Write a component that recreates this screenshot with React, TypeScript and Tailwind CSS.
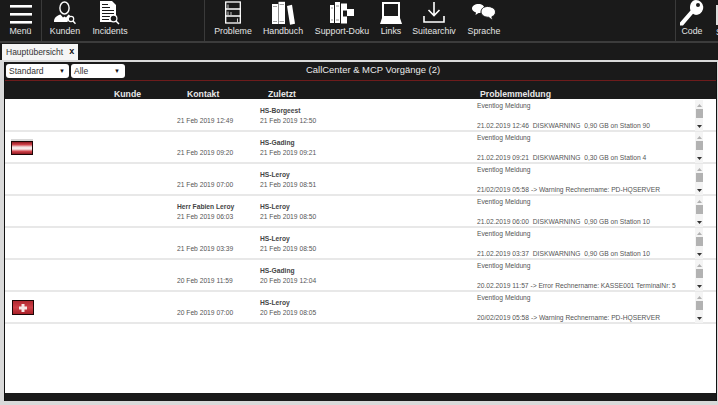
import { ReactNode } from 'react';

type NavItem = { label: string; width: string; icon: ReactNode };

const MenuIcon = () => (
  <svg width="22" height="19" viewBox="0 0 22 19" fill="#fff">
    <rect x="0" y="0" width="22" height="2.600" />
    <rect x="0" y="8" width="22" height="2.600" />
    <rect x="0" y="16" width="22" height="2.600" />
  </svg>
);

const KundenIcon = () => (
  <svg width="22" height="24" viewBox="0 0 22 24" fill="none">
    <ellipse cx="10.500" cy="7" rx="4.600" ry="6" stroke="#fff" strokeWidth="1.400" />
    <path d="M0 21c0-4 2-6 6.500-7.500l2.500 3 1.500-1 1.500 1 2.500-3 1.500.7-1.500 3.300-1 3.500z" fill="#fff" />
    <circle cx="17" cy="18" r="2.700" stroke="#fff" strokeWidth="1.200" />
    <path d="M19 20l2.500 2.700" stroke="#fff" strokeWidth="1.500" />
  </svg>
);

const IncidentsIcon = () => (
  <svg width="20" height="25" viewBox="0 0 20 25" fill="none">
    <path d="M0 1h12l4 4v17H0z" fill="#fff" />
    <path d="M2 4.500h6M2 7.500h8M2 10.500h12M2 13.500h12M2 16.500h8M2 19.500h7" stroke="#1a1a1a" strokeWidth="1" />
    <circle cx="13.500" cy="18.500" r="3.400" fill="#1a1a1a" stroke="#fff" strokeWidth="1.200" />
    <path d="M16 21l3 3" stroke="#fff" strokeWidth="1.500" />
  </svg>
);

const ProblemeIcon = () => (
  <svg width="16" height="23" viewBox="0 0 16 23" fill="none" stroke="#fff">
    <rect x="0.700" y="1" width="14.600" height="21" strokeWidth="1.300" />
    <path d="M0 8h16M0 15h16" strokeWidth="1.700" />
    <path d="M3 3.500v4M3 10.500v4M12.500 17.500v4M6 11v3" strokeWidth="1" stroke="#c8c8c8" />
  </svg>
);

const HandbuchIcon = () => (
  <svg width="23" height="24" viewBox="0 0 23 24" fill="#fff">
    <path d="M0 3h6v20H0z" />
    <path d="M6.500 0.800h6.500v22.200H6.500z" />
    <path d="M15 5l5-1.200 3 19-5 1z" />
    <path d="M1 5.500h4M7.500 3.500h4.500M1 20.500h4M7.500 20.500h4.500" stroke="#8a8a8a" strokeWidth="0.800" />
  </svg>
);

const SupportIcon = () => (
  <svg width="24" height="23" viewBox="0 0 24 23" fill="#fff">
    <path d="M0 4h4v18H0zM5 1h5v21H5z" />
    <path d="M1 7h2M6 5h3M1 19h2M6 19h3" stroke="#7a7a7a" strokeWidth="0.800" />
    <path d="M11 2.500h6v7h-4v6h4v7h-6z" />
    <path d="M17 8h7v7h-7z" />
  </svg>
);

const LinksIcon = () => (
  <svg width="22" height="22" viewBox="0 0 22 22" fill="none">
    <rect x="3" y="1" width="16" height="14" stroke="#fff" strokeWidth="2" />
    <path d="M2 16h18l2 6H0z" fill="#fff" />
  </svg>
);

const SuitearchivIcon = () => (
  <svg width="22" height="21" viewBox="0 0 22 21" fill="none" stroke="#fff" strokeWidth="1.600">
    <path d="M11 0v13M5.500 8l5.500 5.500L16.500 8" />
    <path d="M1 14v6h20v-6" />
  </svg>
);

const SpracheIcon = () => (
  <svg width="24" height="17" viewBox="0 0 24 17" fill="#fff">
    <path d="M6.500 0C10 0 12.500 2 12.500 4.500S10 9 6.500 9L3.500 11l.500-2.500C1.500 7.700 0 6.200 0 4.500 0 2 3 0 6.500 0z" />
    <path d="M15.500 2.500c4.500 0 8 2.300 8 5.500 0 2.100-1.400 3.800-3.600 4.700l.600 3.800-3.800-3.200c-4 0-7.700-2.200-7.700-5.300s2.500-5.500 6.500-5.500z" stroke="#1a1a1a" strokeWidth="1" />
  </svg>
);

const CodeIcon = () => (
  <svg width="24" height="26" viewBox="0 0 24 26" fill="#fff">
    <path fillRule="evenodd" d="M16 0a7.500 7.500 0 0 1 1.500 14.800c-2 .3-3.500 0-4.500-1L3 25.500H0v-3l10.500-12C9 6 11 0 16 0zm2 3a2 2 0 1 0 0 4 2 2 0 0 0 0-4z" />
  </svg>
);

const leftNav: NavItem[] = [
  { label: 'Kunden', width: 'w-[46px]', icon: <KundenIcon /> },
  { label: 'Incidents', width: 'w-[44px]', icon: <IncidentsIcon /> },
];

const midNav: NavItem[] = [
  { label: 'Probleme', width: 'w-[56px]', icon: <ProblemeIcon /> },
  { label: 'Handbuch', width: 'w-[44px]', icon: <HandbuchIcon /> },
  { label: 'Support-Doku', width: 'w-[74px]', icon: <SupportIcon /> },
  { label: 'Links', width: 'w-[24px]', icon: <LinksIcon /> },
  { label: 'Suitearchiv', width: 'w-[62px]', icon: <SuitearchivIcon /> },
  { label: 'Sprache', width: 'w-[38px]', icon: <SpracheIcon /> },
];

const NavButton = ({ item }: { item: NavItem }) => (
  <div className={`${item.width} flex h-full shrink-0 flex-col items-center`}>
    <div className="flex h-[25px] items-center justify-center">{item.icon}</div>
    <span className="whitespace-nowrap text-[8.800px] leading-[12px] text-[#e4e4e4]">{item.label}</span>
  </div>
);

type Row = {
  flag?: 'at' | 'ch';
  person?: string;
  contact: string;
  owner: string;
  last: string;
  message: string;
};

const rows: Row[] = [
  { contact: '21 Feb 2019 12:49', owner: 'HS-Borgeest', last: '21 Feb 2019 12:50', message: '21.02.2019 12:46  DISKWARNING  0,90 GB on Station 90' },
  { flag: 'at', contact: '21 Feb 2019 09:20', owner: 'HS-Gading', last: '21 Feb 2019 09:21', message: '21.02.2019 09:21  DISKWARNING  0,30 GB on Station 4' },
  { contact: '21 Feb 2019 07:00', owner: 'HS-Leroy', last: '21 Feb 2019 08:51', message: '21/02/2019 05:58 -> Warning Rechnername: PD-HQSERVER' },
  { person: 'Herr Fabien Leroy', contact: '21 Feb 2019 06:03', owner: 'HS-Leroy', last: '21 Feb 2019 08:50', message: '21.02.2019 06:00  DISKWARNING  0,90 GB on Station 10' },
  { contact: '21 Feb 2019 03:39', owner: 'HS-Leroy', last: '21 Feb 2019 08:50', message: '21.02.2019 03:37  DISKWARNING  0,90 GB on Station 10' },
  { contact: '20 Feb 2019 11:59', owner: 'HS-Gading', last: '20 Feb 2019 12:04', message: '20.02.2019 11:57 -> Error Rechnername: KASSE001 TerminalNr: 5' },
  { flag: 'ch', contact: '20 Feb 2019 07:00', owner: 'HS-Leroy', last: '20 Feb 2019 08:05', message: '20/02/2019 05:58 -> Warning Rechnername: PD-HQSERVER' },
];

const Flag = ({ kind }: { kind: 'at' | 'ch' }) =>
  kind === 'at' ? (
    <div className="flex flex-col">
      <div className="h-[2px] w-[22px] bg-[#d8d8d8]" />
      <div className="h-[14px] w-[22px] border border-[#1c0606] bg-[linear-gradient(to_bottom,#8e1820_0%,#d2444c_22%,#f4e4e4_42%,#f8eeee_58%,#d2444c_78%,#8e1820_100%)]" />
    </div>
  ) : (
    <div className="mt-[1px] ml-[1px] flex h-[15px] w-[22px] items-center justify-center border border-[#1c0606] bg-[linear-gradient(to_bottom,#b02830,#cf4048,#a82028)]">
      <svg width="10" height="10" viewBox="0 0 10 10" fill="#f6e8e8">
        <path d="M3.500 1h3v2.500H9v3H6.500V9h-3V6.500H1v-3h2.500z" />
      </svg>
    </div>
  );

const Scrollbar = () => (
  <div className="flex h-[31px] w-[8px] shrink-0 flex-col items-center bg-[#f4f4f4]">
    <svg className="mt-[4px]" width="5" height="3" viewBox="0 0 5 3" fill="#b0b0b0">
      <path d="M2.500 0L5 3H0z" />
    </svg>
    <div className="mt-[2px] h-[9px] w-[7px] bg-[#b2b2b2]" />
    <svg className="mt-auto mb-[3px]" width="5" height="3" viewBox="0 0 5 3" fill="#333">
      <path d="M0 0h5L2.500 3z" />
    </svg>
  </div>
);

const TableRow = ({ row }: { row: Row }) => (
  <div className="flex h-[32px] border-b-2 border-[#e8e8e8] text-[6.700px] leading-[10px] text-[#555]">
    <div className="flex w-[172px] shrink-0 items-start pt-[7px] pl-[6px]">{row.flag && <Flag kind={row.flag} />}</div>
    <div className="flex w-[83px] shrink-0 flex-col pt-[6px]">
      <span className="h-[10px] whitespace-nowrap font-bold text-[#444]">{row.person}</span>
      <span className="whitespace-nowrap">{row.contact}</span>
    </div>
    <div className="flex w-[217px] shrink-0 flex-col pt-[6px]">
      <span className="h-[10px] whitespace-nowrap font-bold text-[#444]">{row.owner}</span>
      <span className="whitespace-nowrap">{row.last}</span>
    </div>
    <div className="flex w-[218px] shrink-0 flex-col pt-[1px]">
      <span>Eventlog Meldung</span>
      <span className="mt-[10px] whitespace-pre">{row.message}</span>
    </div>
    <Scrollbar />
  </div>
);

const App = () => {
  return (
    <div className="flex h-[405px] w-[718px] flex-col overflow-hidden bg-[#1a1a1a] font-['Liberation_Sans',sans-serif]">
      <div className="flex h-[41px] shrink-0">
        <div className="flex w-[42px] shrink-0 flex-col items-center border-r border-[#3a3a3a]">
          <div className="flex h-[25px] items-center pt-[3px]">
            <MenuIcon />
          </div>
          <span className="text-[8.800px] leading-[12px] text-[#e4e4e4]">Menü</span>
        </div>
        <div className="flex w-[163px] shrink-0 items-start border-r border-[#3a3a3a]">
          {leftNav.map((item) => (
            <NavButton key={item.label} item={item} />
          ))}
        </div>
        <div className="flex w-[471px] shrink-0 items-start border-r border-[#3a3a3a]">
          {midNav.map((item) => (
            <NavButton key={item.label} item={item} />
          ))}
        </div>
        <div className="flex w-[40px] shrink-0 justify-start pl-[5px]">
          <NavButton item={{ label: 'Code', width: 'w-[22px]', icon: <CodeIcon /> }} />
        </div>
        <div className="flex w-[2px] shrink-0 flex-col overflow-hidden">
          <div className="mt-[5px] h-[20px] bg-[#dddddd]" />
          <span className="mt-[1px] text-[8.800px] leading-[12px] text-[#e4e4e4]">S</span>
        </div>
      </div>
      <div className="h-[2px] shrink-0 bg-[#3c3c3c]" />
      <div className="flex h-[17px] shrink-0 items-end pl-[2px]">
        <div className="flex h-[16px] w-[76px] items-center gap-[6px] bg-[#f5f5f5] pl-[4px] text-[8.500px] text-[#333]">
          <span>Hauptübersicht</span>
          <span className="text-[9px] font-bold text-[#111]">x</span>
        </div>
      </div>
      <div className="flex min-h-0 flex-1 flex-col border-t-2 border-r border-b-4 border-l-4 border-[#d9d9d9]">
        <div className="flex min-h-0 flex-1 flex-col border-x border-[#111] bg-white">
          <div className="flex h-[37px] shrink-0 flex-col bg-[#1a1a1a]">
            <div className="flex h-[18px] shrink-0 items-start pt-[2px] pl-[1px]">
              <div className="flex h-[14px] w-[63px] items-center justify-between rounded-[3px] bg-white pr-[4px] pl-[3px] text-[8.500px] text-[#333]">
                <span>Standard</span>
                <span className="text-[6px] text-[#111]">▼</span>
              </div>
              <div className="ml-[2px] flex h-[14px] w-[54px] items-center justify-between rounded-[3px] bg-white pr-[5px] pl-[3px] text-[8.500px] text-[#333]">
                <span>Alle</span>
                <span className="text-[6px] text-[#111]">▼</span>
              </div>
              <span className="ml-[181px] whitespace-nowrap text-[9.450px] leading-[12px] text-[#e8e8e8]">CallCenter &amp; MCP Vorgänge (2)</span>
            </div>
            <div className="h-px shrink-0 bg-[#6e1c1c]" />
            <div className="flex flex-1 items-end text-[8.700px] leading-[10px] font-bold text-[#e8e8e8]">
              <span className="ml-[109px] w-[73px]">Kunde</span>
              <span className="w-[81px]">Kontakt</span>
              <span className="w-[212px]">Zuletzt</span>
              <span>Problemmeldung</span>
            </div>
          </div>
          <div className="flex flex-col pt-[1px]">
            {rows.map((row) => (
              <TableRow key={row.contact} row={row} />
            ))}
          </div>
          <div className="min-h-0 flex-1" />
          <div className="h-[8px] shrink-0 bg-[#1a1a1a]" />
        </div>
      </div>
    </div>
  );
};

export default App;
